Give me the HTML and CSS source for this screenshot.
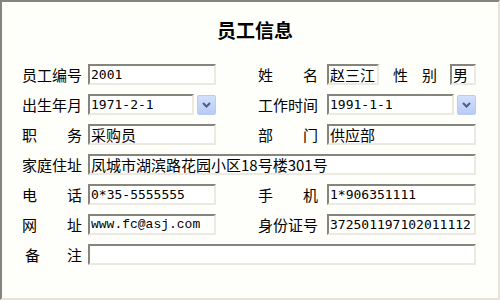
FILE: index.html
```html
<!DOCTYPE html>
<html lang="zh-CN">
<head>
    <meta charset="UTF-8">
    <meta name="viewport" content="width=device-width, initial-scale=1.0">
    <title>员工信息</title>
    <link rel="stylesheet" href="styles.css">
</head>
<body>

    <div class="frame">
        <h2 class="title">员工信息</h2>

        <!-- 第一行 -->
        <div class="row">
            <label class="lbl"><span>员</span><span>工</span><span>编</span><span>号</span></label>
            <input class="field num w-left" value="2001">
            <label class="lbl lbl-right"><span>姓</span><span>名</span></label>
            <input class="field cn w-name" value="赵三江">
            <label class="lbl lbl-sex"><span>性</span><span>别</span></label>
            <input class="field cn w-sex" value="男">
        </div>

        <div class="row">
            <label class="lbl"><span>出</span><span>生</span><span>年</span><span>月</span></label>
            <input class="field num w-date" value="1971-2-1">
            <button class="drop"><svg width="9" height="6" viewBox="0 0 9 6"><polyline points="1,1 4.5,4.5 8,1" fill="none" stroke="#4a5f87" stroke-width="2"/></svg></button>
            <label class="lbl lbl-right"><span>工</span><span>作</span><span>时</span><span>间</span></label>
            <input class="field num w-date2" value="1991-1-1">
            <button class="drop"><svg width="9" height="6" viewBox="0 0 9 6"><polyline points="1,1 4.5,4.5 8,1" fill="none" stroke="#4a5f87" stroke-width="2"/></svg></button>
        </div>

        <div class="row">
            <label class="lbl"><span>职</span><span>务</span></label>
            <input class="field cn w-left" value="采购员">
            <label class="lbl lbl-right"><span>部</span><span>门</span></label>
            <input class="field cn w-right" value="供应部">
        </div>

        <div class="row">
            <label class="lbl"><span>家</span><span>庭</span><span>住</span><span>址</span></label>
            <input class="field cn w-full" value="凤城市湖滨路花园小区18号楼301号">
        </div>

        <div class="row">
            <label class="lbl"><span>电</span><span>话</span></label>
            <input class="field num w-left" value="0*35-5555555">
            <label class="lbl lbl-right"><span>手</span><span>机</span></label>
            <input class="field num w-right" value="1*906351111">
        </div>

        <div class="row">
            <label class="lbl"><span>网</span><span>址</span></label>
            <input class="field url w-left" value="www.fc@asj.com">
            <label class="lbl lbl-right"><span>身</span><span>份</span><span>证</span><span>号</span></label>
            <input class="field num w-right" value="372501197102011112">
        </div>

        <!-- 备注 -->
        <div class="row row-last">
            <label class="lbl lbl-note"><span>备</span><span>注</span></label>
            <input class="field cn w-full" value="">
        </div>
    </div>

</body>
</html>
```

FILE: styles.css
```css
body {
    margin: 0;
    font-family: "Noto Sans CJK SC", sans-serif;
    color: #000;
}
.frame {
    box-sizing: border-box;
    width: 500px;
    height: 300px;
    padding: 16px 0 0 20px;
    background-color: #fefefa;
    border: 2px solid;
    border-color: #85857d #e6e4da #e6e4da #85857d;
}
.title {
    margin: 0 0 22px 0;
    width: 466px;
    text-align: center;
    font-size: 19px;
    line-height: 24px;
    font-weight: bold;
}
.row {
    display: flex;
    align-items: center;
    height: 21px;
    margin-bottom: 9px;
}
.row-last {
    margin-top: 5px;
}
.lbl {
    display: flex;
    justify-content: space-between;
    width: 60px;
    font-size: 15px;
    line-height: 21px;
}
.lbl-right {
    margin-left: 42px;
}
.lbl-sex {
    width: 44px;
    margin-left: 14px;
}
.lbl-note {
    width: 57px;
    padding-left: 3px;
}
.field {
    box-sizing: border-box;
    height: 21px;
    margin: 0 0 0 6px;
    padding: 0 1px;
    border: 2px solid;
    border-color: #85857c #ebe9e0 #ebe9e0 #85857c;
    background-color: #fff;
    color: #000;
    outline: none;
}
.lbl-right + .field {
    margin-left: 9px;
}
.lbl-sex + .field {
    margin-left: 13px;
}
.cn {
    font-family: "Noto Sans CJK SC", sans-serif;
    font-size: 15px;
}
.num {
    font-family: "DejaVu Sans Mono", "Noto Sans CJK SC", monospace;
    font-size: 13px;
}
.url {
    font-family: "Liberation Mono", monospace;
    font-size: 13px;
}
.w-left { width: 128px; }
.w-right { width: 149px; }
.w-name { width: 52px; }
.w-sex { width: 26px; }
.w-date { width: 106px; }
.w-date2 { width: 127px; }
.w-full { width: 388px; }
.drop {
    box-sizing: border-box;
    display: flex;
    align-items: center;
    justify-content: center;
    width: 19px;
    height: 20px;
    margin-left: 3px;
    padding: 0;
    border: 1px solid #b7cbf5;
    border-radius: 2px;
    background: linear-gradient(#d3e0fd, #b8cbf6);
}
```
